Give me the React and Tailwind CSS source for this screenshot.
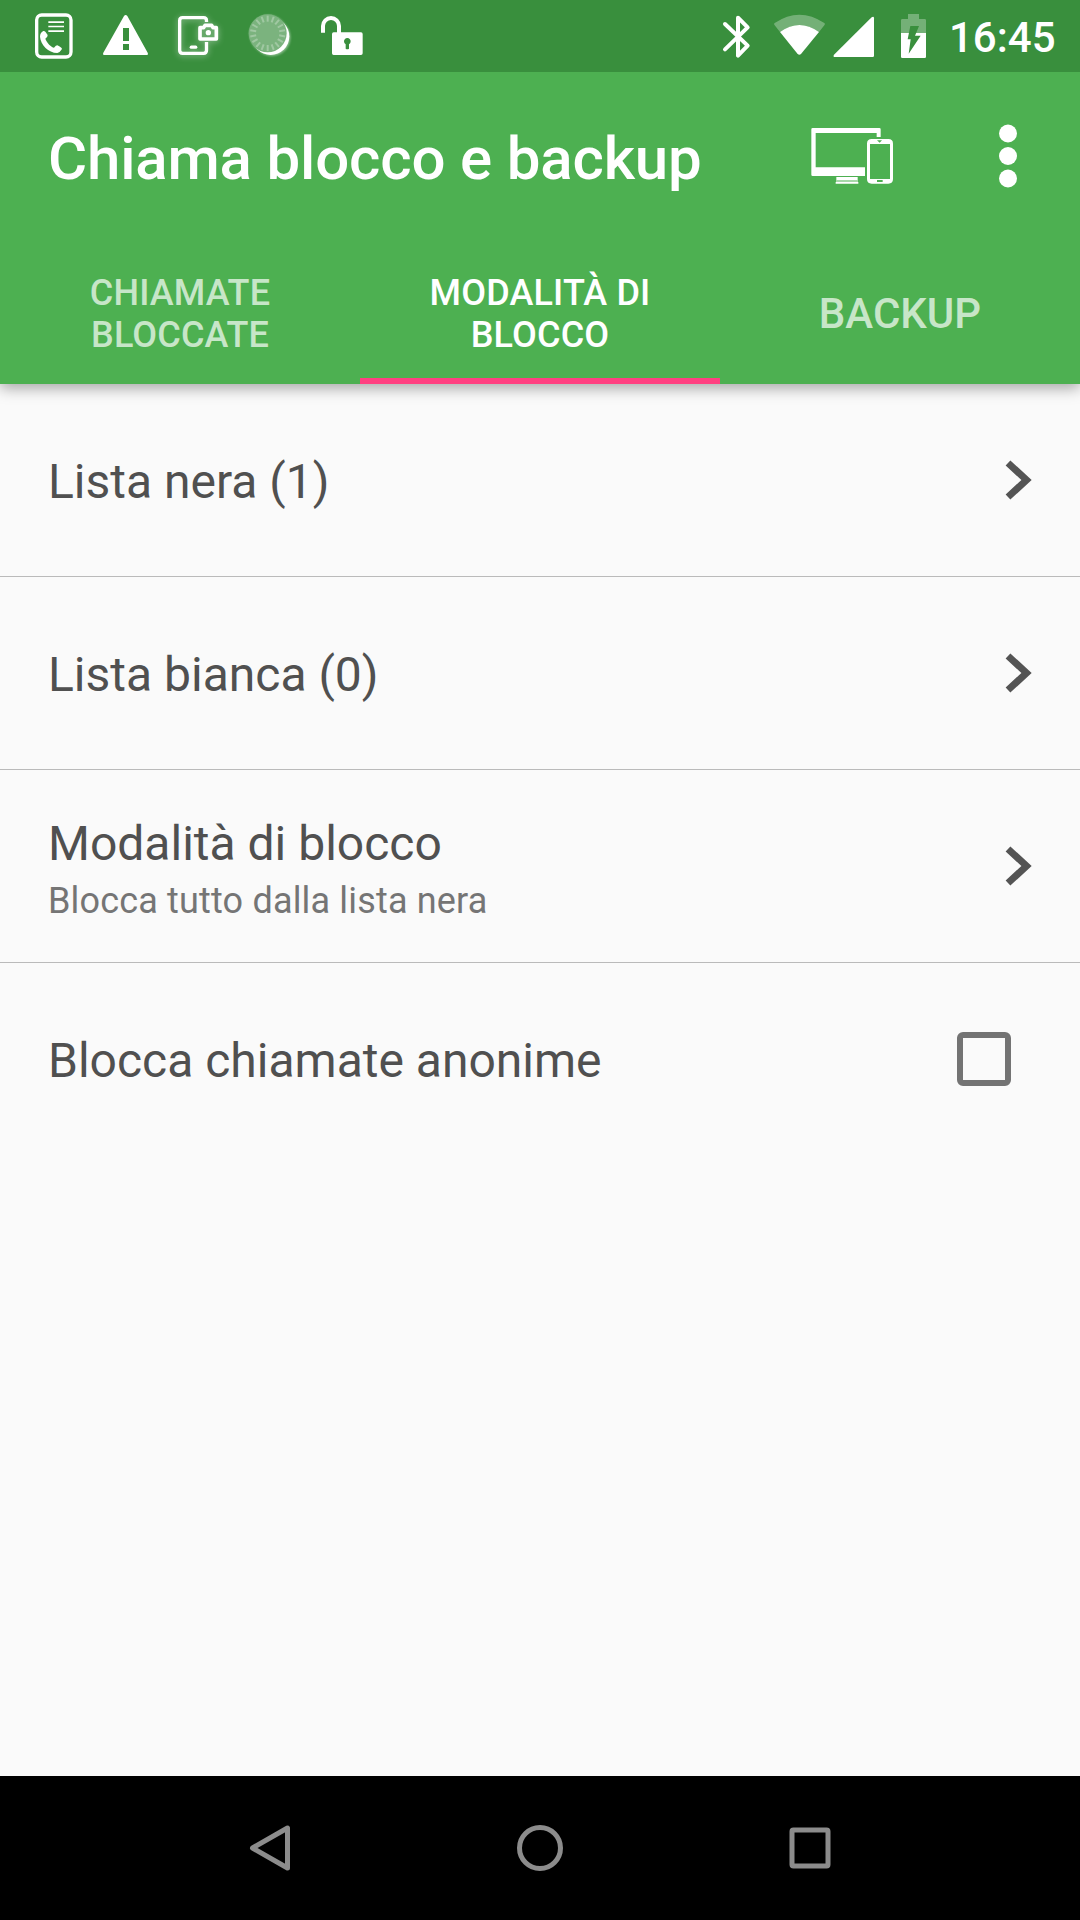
import { useState } from 'react'

const tabs = ['Chiamate bloccate', 'Modalità di blocco', 'Backup']

const rows = [
  { title: 'Lista nera (1)' },
  { title: 'Lista bianca (0)' },
  { title: 'Modalità di blocco', subtitle: 'Blocca tutto dalla lista nera' },
]

const RAYS = Array.from({ length: 18 }, (_, i) => i * 20)

function StatusBar() {
  return (
    <div className="relative z-10 h-[72px] bg-[#398f3d] flex items-center pl-[18px] text-white">
      {/* Call log */}
      <svg viewBox="0 0 216 216" className="size-[72px]" fill="none">
        <rect x="56" y="45" width="103" height="126" rx="15" stroke="#fff" strokeWidth="10" />
        <path d="M91 66.500h47M91 79.500h47M91 93.500h47" stroke="#fff" strokeWidth="5" />
        <path d="M76 93Q66 98 66 110C68 135 91 158 118 159Q127 156 132 147Q131 142 118 136Q114 136 108 143C100 142 86 128 82 116Q90 110 89 105L82 95Q79 92 76 93z" fill="#fff" />
      </svg>

      {/* Warning */}
      <svg viewBox="0 0 216 216" className="size-[72px]" fill="#fff">
        <path fillRule="evenodd" d="M102 48q5-6 10 0L173 158q3 7-4 7H44q-7 0-4-7zM99 84v39h18V84zM99 132v18h18v-18z" />
      </svg>

      {/* Screen capture */}
      <svg viewBox="0 0 216 216" className="size-[72px] drop-shadow-[0_1px_3px_rgba(255,255,255,0.45)]" fill="none" stroke="#fff" strokeWidth="10">
        <path d="M133.500 66V62q0-9-9-9H62q-9 0-9 9v89q0 9 9 9h62.500q9 0 9-9v-25" />
        <path d="M88 141.500h13" strokeLinecap="round" />
        <path d="M114 83h11l4-7h20l4 7h10v34h-49z" strokeWidth="11" strokeLinejoin="round" />
        <circle cx="139" cy="98" r="8" fill="#fff" stroke="none" />
      </svg>

      {/* Dimmer */}
      <svg viewBox="0 0 216 216" className="size-[72px] drop-shadow-[1px_1px_1px_rgba(255,255,255,0.45)]">
        <circle cx="110" cy="109" r="56" fill="#fff" />
        <circle cx="101" cy="100" r="57" fill="#7bb37e" />
        {RAYS.map((deg) => (
          <path key={deg} d="M101 47v18" stroke="#a0c8a2" strokeWidth="6" transform={`rotate(${deg} 101 100)`} />
        ))}
      </svg>

      {/* Unlocked */}
      <svg viewBox="0 0 216 216" className="size-[72px]">
        <path d="M51 98V78a24 24 0 0 1 48 0v22" fill="none" stroke="#fff" strokeWidth="12" />
        <path fillRule="evenodd" fill="#fff" d="M83 97h82q5 0 5 5v58q0 5-5 5H83q-5 0-5-5v-58q0-5 5-5zM119 133v13q5 4 10 0v-13a10 10 0 1 0-10 0z" />
      </svg>

      <div className="ml-auto flex items-center">
        <svg viewBox="0 0 144 216" className="w-12 h-[72px]" fill="none" stroke="#fff" strokeWidth="12" strokeLinecap="round" strokeLinejoin="round">
          <path d="M39 72L107 137L78 167V53L107 82L39 148" />
        </svg>
        <svg viewBox="0 0 180 216" className="ml-[10px] w-[60px] h-[72px]" fill="#fff">
          <path opacity=".3" d="M14 76Q10 72 14 69Q88 19 163 69Q167 72 163 76L147 96Q88 54 30 96z" />
          <path d="M30 96Q88 54 147 96L93 162q-5 5-10 0z" />
        </svg>
        <svg viewBox="0 0 144 216" className="w-12 h-[72px]" fill="#fff">
          <path d="M125 52q7-4 7 3v112q0 4-4 4H15q-7 0-3-7z" />
        </svg>
        <svg viewBox="0 0 144 216" className="ml-3 w-12 h-[72px]" fill="#fff">
          <path opacity=".3" d="M54 42h33v15h17q4 0 4 4v38H33V61q0-4 4-4h17z" />
          <path d="M33 99h75v71q0 4-4 4H37q-4 0-4-4z" />
          <path fill="#398f3d" d="M61 78h26L75 107h17L56 161L62 118H53z" />
        </svg>
        <span className="ml-[11px] w-[131px] pt-[3px] text-[42px] leading-[69px] font-medium">16:45</span>
      </div>
    </div>
  )
}

function DevicesIcon() {
  return (
    <svg viewBox="90 81 252 174" className="w-[84px] h-[58px]" fill="#fff">
      <path d="M98 84h200q4 0 4 4v23h-12V99H107v103h148v26H98q-4 0-4-4V88q0-4 4-4z" />
      <path d="M169 231h64v9h-64zM168 241.500h66v3h-66zM167 246h68v5h-68z" />
      <path fillRule="evenodd" d="M275 117h50q14 0 14 14v106q0 14-14 14h-50q-14 0-14-14V131q0-14 14-14zM270 132v105h60V132z" />
      <path d="M291 121h15l-7 7zM291 240h17v6h-17z" fill="#4db051" />
    </svg>
  )
}

function Chevron() {
  return (
    <svg viewBox="0 0 30 42" className="w-[30px] h-[42px]" fill="none" stroke="#545454" strokeWidth="7">
      <path d="M6 4L24.500 21L6 38" />
    </svg>
  )
}

export default function App() {
  const [active, setActive] = useState(1)
  const [blockAnonymous, setBlockAnonymous] = useState(false)

  return (
    <div className="w-[1080px] h-[1920px] flex flex-col bg-[#fafafa] font-['Roboto',sans-serif] overflow-hidden">
      <StatusBar />

      <header className="bg-[#4db051] shadow-[0_4px_14px_rgba(0,0,0,0.35)]">
        <div className="h-[168px] flex items-center pl-12 pr-[62px] text-white">
          <h1 className="text-[60px] leading-[70px] tracking-[-0.16px] font-medium pt-1.5">Chiama blocco e backup</h1>
          <button className="ml-auto mr-[104px]">
            <DevicesIcon />
          </button>
          <button>
            <svg viewBox="0 0 20 66" className="w-5 h-[66px]" fill="#fff">
              <circle cx="10" cy="10.500" r="9" />
              <circle cx="10" cy="33" r="9" />
              <circle cx="10" cy="55.500" r="9" />
            </svg>
          </button>
        </div>

        <nav className="h-36 grid grid-cols-3">
          {tabs.map((tab, i) => (
            <button
              key={tab}
              onClick={() => setActive(i)}
              className={`flex items-center justify-center px-9 pt-2.5 border-b-[6px] font-medium uppercase ${
                i === active ? 'text-white border-[#ff4081]' : 'text-white/70 border-transparent'
              } ${tab.includes(' ') ? 'text-[36px] leading-[42px] tracking-[0.15px]' : 'text-[42px] leading-[50px]'}`}
            >
              <span className="w-[230px]">{tab}</span>
            </button>
          ))}
        </nav>
      </header>

      <main className="flex-1 text-[#505050]">
        {rows.map((row) => (
          <div key={row.title} className="h-[193px] flex items-center justify-between pl-12 pr-12 border-b border-[#bababa]">
            <div className={row.subtitle ? 'pt-3' : 'pt-0.5'}>
              <p className="text-[48px] leading-[57px]">{row.title}</p>
              {row.subtitle && (
                <p className="text-[36px] leading-[58px] tracking-[0.17px] text-[#757575]">{row.subtitle}</p>
              )}
            </div>
            <Chevron />
          </div>
        ))}

        <label className="h-48 flex items-center justify-between pl-12 pr-[69px]">
          <span className="pt-0.5 text-[48px] leading-[57px]">Blocca chiamate anonime</span>
          <input
            type="checkbox"
            checked={blockAnonymous}
            onChange={(e) => setBlockAnonymous(e.target.checked)}
            className="appearance-none size-[54px] border-[6px] border-[#737373] rounded-md checked:bg-[#737373]"
          />
        </label>
      </main>

      <footer className="h-36 bg-black flex items-center justify-center gap-[222px]">
        <svg viewBox="0 0 48 48" className="size-12" fill="none" stroke="#8c8c8c" strokeWidth="5" strokeLinejoin="round">
          <path d="M6.500 24L41.500 4V44z" />
        </svg>
        <svg viewBox="0 0 48 48" className="size-12" fill="none" stroke="#8c8c8c" strokeWidth="5">
          <circle cx="24" cy="24" r="20.500" />
        </svg>
        <svg viewBox="0 0 48 48" className="size-12" fill="none" stroke="#8c8c8c" strokeWidth="5">
          <rect x="6" y="6" width="36" height="36" rx="1.500" />
        </svg>
      </footer>
    </div>
  )
}
